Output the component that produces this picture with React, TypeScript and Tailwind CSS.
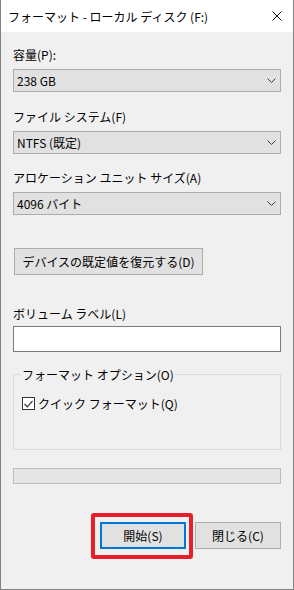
import React from 'react';

const font = { fontFamily: '"Noto Sans CJK JP", "Noto Sans", sans-serif' };

function Chevron() {
  return (
    <svg width="9" height="5" viewBox="0 0 9 5" className="shrink-0">
      <polyline points="0.5,0.5 4.5,4.5 8.5,0.5" fill="none" stroke="#3c3c3c" strokeWidth="1" />
    </svg>
  );
}

function Combo({ value }: { value: string }) {
  return (
    <div className="flex h-[23px] items-center justify-between border border-[#adadad] bg-[#e1e1e1] pl-[3px] pr-[4px]">
      <span className="leading-[15px]">{value}</span>
      <Chevron />
    </div>
  );
}

function Label({ text, className }: { text: string; className: string }) {
  return <div className={`h-[15px] leading-[15px] ${className}`}>{text}</div>;
}

export default function App() {
  return (
    <div
      style={font}
      className="flex h-[590px] w-[294px] flex-col border-x border-b border-[#828282] bg-[#f0f0f0] text-[12px] text-black"
    >
      {/* Title bar */}
      <div className="flex h-[32px] shrink-0 items-center justify-between bg-white pl-[7px] pr-[11px]">
        <span className="leading-[15px]">フォーマット - ローカル ディスク (F:)</span>
        <svg width="10" height="10" viewBox="0 0 10 10">
          <path d="M0.5 0.5 L9.5 9.5 M9.5 0.5 L0.5 9.5" stroke="#111" strokeWidth="1" />
        </svg>
      </div>

      <div className="flex flex-col px-[12px]">
        <Label text="容量(P):" className="mt-[15px]" />
        <div className="mt-[7px]">
          <Combo value="238 GB" />
        </div>

        <Label text="ファイル システム(F)" className="mt-[17px]" />
        <div className="mt-[7px]">
          <Combo value="NTFS (既定)" />
        </div>

        <Label text="アロケーション ユニット サイズ(A)" className="mt-[16px]" />
        <div className="mt-[7px]">
          <Combo value="4096 バイト" />
        </div>

        <button className="ml-[1px] mt-[33px] flex h-[27px] w-[189px] items-center justify-center border border-[#adadad] bg-[#e1e1e1] leading-[15px]">
          デバイスの既定値を復元する(D)
        </button>

        <Label text="ボリューム ラベル(L)" className="mt-[31px]" />
        <div className="mt-[5px] h-[26px] border border-[#7a7a7a] bg-white" />

        <fieldset className="mt-[15px] border border-[#dcdcdc] pb-[39px] pl-[8px] pt-[15px]">
          <legend className="-ml-[1px] h-[15px] px-[1px] leading-[15px]">フォーマット オプション(O)</legend>
          <div className="flex h-[13px] items-center gap-[3px]">
            <div className="flex h-[13px] w-[13px] items-center justify-center border border-[#333] bg-white">
              <svg width="9" height="8" viewBox="0 0 9 8">
                <polyline points="0.5,4 3.3,6.8 8.5,0.8" fill="none" stroke="#333" strokeWidth="1.2" />
              </svg>
            </div>
            <span className="leading-[15px]">クイック フォーマット(Q)</span>
          </div>
        </fieldset>

        <div className="mt-[18px] h-[16px] border border-[#bcbcbc] bg-[#e6e6e6]" />

        <div className="mt-[38px] flex justify-end gap-[9px]">
          <div className="relative">
            <button className="flex h-[27px] w-[86px] items-center justify-center border-2 border-[#0078d7] bg-[#e1e1e1] leading-[15px]">
              開始(S)
            </button>
            <div className="pointer-events-none absolute -left-[9px] -top-[9px] h-[46px] w-[102px] rounded-[3px] border-4 border-[#e81e2b]" />
          </div>
          <button className="flex h-[27px] w-[86px] items-center justify-center border border-[#adadad] bg-[#e1e1e1] leading-[15px]">
            閉じる(C)
          </button>
        </div>
      </div>
    </div>
  );
}
